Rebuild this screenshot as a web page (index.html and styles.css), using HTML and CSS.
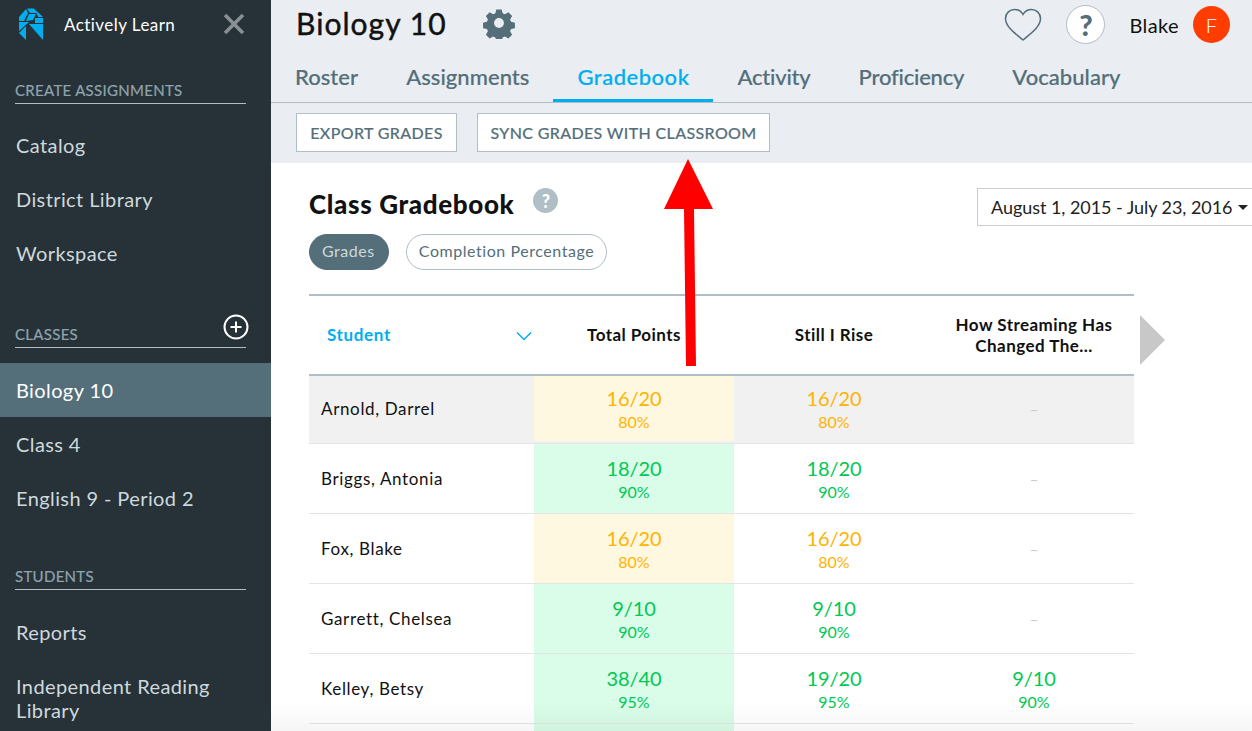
FILE: index.html
```html
<!DOCTYPE html>
<html lang="en">
<head>
<meta charset="utf-8">
<title>Class Gradebook</title>
<link rel="stylesheet" href="styles.css">
</head>
<body>
<div class="app">
  <aside class="sidebar">
    <div class="brand">
      <svg class="logo" viewBox="0 0 25 33" width="25" height="33">
        <polygon fill="#00aeef" points="0,9 7,1 9,5 5,13 0,13"/>
        <polygon fill="#00aeef" points="8,0.5 15,0.5 18,5 11,5"/>
        <polygon fill="#00aeef" points="10,6 17,6 14,12 7,13"/>
        <polygon fill="#00aeef" points="16,1.5 24,9 19,9"/>
        <polygon fill="#00aeef" points="16,10 24,10 24,15 16,15"/>
        <polygon fill="#00aeef" points="0,14 10,14 0,23"/>
        <polygon fill="#00aeef" points="0,25 7,18 7,32"/>
        <polygon fill="#00aeef" points="10,16 24,16 24,32"/>
      </svg>
      <span class="brand-name">Actively Learn</span>
      <svg class="close" viewBox="0 0 20 20" width="20" height="20"><path d="M1 1 19 19M19 1 1 19" stroke="#8a8f92" stroke-width="3.6" fill="none"/></svg>
    </div>
    <div class="side-head head-create"><span>CREATE ASSIGNMENTS</span></div>
    <nav class="side-list">
      <a class="side-item">Catalog</a>
      <a class="side-item">District Library</a>
      <a class="side-item">Workspace</a>
    </nav>
    <div class="side-head head-classes"><span>CLASSES</span>
      <svg class="plus" viewBox="0 0 26 26" width="26" height="26"><circle cx="13" cy="13" r="11.5" fill="none" stroke="#fff" stroke-width="2"/><path d="M7.5 13h11M13 7.500v11" stroke="#fff" stroke-width="2"/></svg>
    </div>
    <nav class="side-list">
      <a class="side-item active">Biology 10</a>
      <a class="side-item">Class 4</a>
      <a class="side-item">English 9 - Period 2</a>
    </nav>
    <div class="side-head head-students"><span>STUDENTS</span></div>
    <nav class="side-list">
      <a class="side-item">Reports</a>
      <a class="side-item multi">Independent Reading Library</a>
    </nav>
  </aside>

  <main class="main">
    <header class="topbar">
      <div class="title-row">
        <h1 class="class-title">Biology 10</h1>
        <svg class="gear" viewBox="0 0 32 32" width="32" height="32">
          <path fill="#546e7a" fill-rule="evenodd" d="M13 1h6l1 4.300 2.600 1.100 3.800-2.300 4.200 4.200-2.300 3.800 1.100 2.600 4.300 1v6l-4.300 1-1.100 2.600 2.300 3.800-4.200 4.200-3.800-2.300-2.600 1.100-1 4.300h-6l-1-4.300-2.600-1.100-3.800 2.300-4.200-4.200 2.300-3.800-1.100-2.600-4.300-1v-6l4.300-1 1.100-2.600-2.300-3.800 4.200-4.200 3.800 2.300 2.600-1.100zM16 10.500a5.500 5.500 0 1 0 0 11 5.500 5.500 0 0 0 0-11z" transform="translate(1.600 1.600) scale(.9)"/>
        </svg>
        <div class="top-right">
          <svg class="heart" viewBox="0 0 38 34" width="38" height="34"><path d="M19 32C12 26 1.500 19 1.500 10.500 1.500 5.500 5.500 1.500 10.500 1.500c3.500 0 6.800 2 8.500 5 1.700-3 5-5 8.500-5 5 0 9 4 9 9C36.500 19 26 26 19 32z" fill="none" stroke="#546e7a" stroke-width="1.500"/></svg>
          <span class="help-circle">?</span>
          <span class="user-name">Blake</span>
          <span class="avatar">F</span>
        </div>
      </div>
      <nav class="tabs">
        <a class="tab">Roster</a>
        <a class="tab">Assignments</a>
        <a class="tab current">Gradebook</a>
        <a class="tab tight">Activity</a>
        <a class="tab tight">Proficiency</a>
        <a class="tab">Vocabulary</a>
      </nav>
      <div class="actions">
        <button class="action-btn btn-export">EXPORT GRADES</button>
        <button class="action-btn btn-sync">SYNC GRADES WITH CLASSROOM</button>
      </div>
    </header>

    <section class="content">
      <div class="content-head">
        <div>
          <div class="gb-title-row">
            <h2 class="gb-title">Class Gradebook</h2>
            <span class="gb-help">?</span>
          </div>
          <div class="pills">
            <span class="pill on">Grades</span>
            <span class="pill">Completion Percentage</span>
          </div>
        </div>
        <div class="date-range">August 1, 2015 - July 23, 2016<i class="caret"></i></div>
      </div>

      <div class="table-wrap">
        <div class="table">
          <div class="t-row t-header">
            <div class="cell student-h"><span>Student</span>
              <svg viewBox="0 0 16 10" width="16" height="10"><path d="M1 1.500 8 8.500 15 1.500" fill="none" stroke="#00aeef" stroke-width="1.500"/></svg>
            </div>
            <div class="cell col-h">Total Points</div>
            <div class="cell col-h">Still I Rise</div>
            <div class="cell col-h">How Streaming Has Changed The...</div>
          </div>

          <div class="t-row first hover">
            <div class="cell name">Arnold, Darrel</div>
            <div class="cell score amber bg-amber"><b>16/20</b><small>80%</small></div>
            <div class="cell score amber"><b>16/20</b><small>80%</small></div>
            <div class="cell score none">–</div>
          </div>
          <div class="t-row">
            <div class="cell name">Briggs, Antonia</div>
            <div class="cell score green bg-green"><b>18/20</b><small>90%</small></div>
            <div class="cell score green"><b>18/20</b><small>90%</small></div>
            <div class="cell score none">–</div>
          </div>
          <div class="t-row">
            <div class="cell name">Fox, Blake</div>
            <div class="cell score amber bg-amber"><b>16/20</b><small>80%</small></div>
            <div class="cell score amber"><b>16/20</b><small>80%</small></div>
            <div class="cell score none">–</div>
          </div>
          <div class="t-row">
            <div class="cell name">Garrett, Chelsea</div>
            <div class="cell score green bg-green"><b>9/10</b><small>90%</small></div>
            <div class="cell score green"><b>9/10</b><small>90%</small></div>
            <div class="cell score none">–</div>
          </div>
          <div class="t-row">
            <div class="cell name">Kelley, Betsy</div>
            <div class="cell score green bg-green"><b>38/40</b><small>95%</small></div>
            <div class="cell score green"><b>19/20</b><small>95%</small></div>
            <div class="cell score green"><b>9/10</b><small>90%</small></div>
          </div>
          <div class="t-row">
            <div class="cell name"></div>
            <div class="cell score bg-green"></div>
            <div class="cell score"></div>
            <div class="cell score"></div>
          </div>
        </div>
        <i class="next-arrow"></i>
      </div>
    </section>
  </main>

  <div class="fade"></div>
  <svg class="annotation" viewBox="0 0 60 220" width="60" height="220">
    <polygon fill="#ff0000" points="30,2 55,52 36,52 38,209 28,209 26,52 6,52"/>
  </svg>
</div>
</body>
</html>
```
FILE: styles.css
```css
* { box-sizing: border-box; }
html, body { margin: 0; height: 100%; overflow: hidden; background: #fff; }
body { font-family: "Lato", "Noto Sans", sans-serif; color: #111; }

.app { display: flex; width: 1252px; height: 731px; overflow: hidden; position: relative; }

/* Sidebar */
.sidebar { width: 271px; flex: none; height: 731px; background: #263238; color: #fff; overflow: hidden; }
.brand { display: flex; align-items: center; height: 50px; padding: 0 27px 2px 19px; }
.logo { flex: none; }
.brand-name { margin-left: 20px; font-size: 17px; letter-spacing: .45px; color: #fff; flex: 1; }
.close { flex: none; }

.side-head { margin: 0 25px 0 15px; height: 26px; border-bottom: 1px solid #b0bec5; font-size: 15px; letter-spacing: .3px; color: #90a4ae; display: flex; align-items: flex-start; justify-content: space-between; position: relative; line-height: 17px; -webkit-text-stroke: .2px #90a4ae; }
.side-head span { padding-top: 4px; }
.head-create { margin-top: 28px; margin-bottom: 14px; }
.head-classes { margin-top: 42px; margin-bottom: 15px; }
.head-students { margin-top: 39px; margin-bottom: 15px; }
.plus { position: absolute; right: -3px; top: -8px; }

.side-list { display: flex; flex-direction: column; }
.side-item { display: flex; align-items: center; height: 54px; padding: 0 16px; font-size: 20px; letter-spacing: .4px; color: #cfd8dc; }
.side-item.active { background: #546e7a; color: #fff; }
.side-item.multi { height: auto; padding-top: 15px; line-height: 24px; width: 240px; }

/* Main */
.main { flex: 1; min-width: 0; display: flex; flex-direction: column; }
.topbar { height: 163px; flex: none; background: #eaeef2; }
.title-row { display: flex; align-items: center; height: 49px; padding: 0 22px 0 25px; }
.class-title { margin: 0 0 3px; font-size: 30px; font-weight: 400; letter-spacing: 1.05px; color: #111; -webkit-text-stroke: .45px #111; }
.gear { margin: 0 0 3px 36px; flex: none; }
.top-right { margin-left: auto; display: flex; align-items: center; }
.heart { flex: none; margin-top: 1px; }
.help-circle { width: 39px; height: 39px; border-radius: 50%; background: #fff; border: 1px solid #b0bec5; margin-left: 24px; display: flex; align-items: center; justify-content: center; font-size: 29px; font-weight: 900; color: #546e7a; }
.user-name { margin-left: 24px; font-size: 20px; letter-spacing: .4px; color: #111; }
.avatar { width: 37px; height: 37px; border-radius: 50%; background: #ff3d00; color: #fff; margin-left: 14px; display: flex; align-items: center; justify-content: center; font-size: 20px; font-weight: 300; }

.tabs { display: flex; height: 54px; border-bottom: 1px solid #b0bec5; }
.tab { height: 53px; padding: 14px 24px 0; font-size: 22px; font-weight: 500; letter-spacing: .05px; color: #546e7a; white-space: nowrap; -webkit-text-stroke: .2px #546e7a; }
.tab.tight { letter-spacing: -.2px; }
.tab.current { color: #00aeef; border-bottom: 3px solid #00aeef; letter-spacing: .5px; -webkit-text-stroke: .2px #00aeef; }

.actions { display: flex; gap: 20px; padding: 10px 25px 0; }
.action-btn { height: 39px; background: #fff; border: 1px solid #b0bec5; padding: 0; text-align: center; font-family: inherit; font-size: 16px; font-weight: 500; letter-spacing: .36px; color: #546e7a; border-radius: 0; -webkit-text-stroke: .15px #546e7a; }
.btn-export { width: 161px; }
.btn-sync { width: 293px; }

/* Content */
.content { flex: 1; padding: 0 0 0 38px; background: #fff; }
.content-head { display: flex; justify-content: space-between; align-items: flex-start; height: 131px; }
.gb-title-row { display: flex; align-items: center; height: 71px; padding-top: 11px; }
.gb-title { margin: 0; font-size: 26px; font-weight: 900; letter-spacing: .65px; color: #111; }
.gb-help { width: 25px; height: 25px; border-radius: 50%; background: #b0bec5; color: #fff; margin-left: 19px; margin-top: -7px; display: flex; align-items: center; justify-content: center; font-size: 18px; font-weight: 900; }
.pills { display: flex; gap: 17px; }
.pill { height: 36px; border-radius: 18px; border: 1px solid #b0bec5; padding: 0 12px 3px; display: flex; align-items: center; font-size: 16px; letter-spacing: .55px; color: #546e7a; }
.pill.on { background: #546e7a; border-color: #546e7a; color: #cfd8dc; padding: 0 13px 3px 12px; }
.date-range { margin-top: 25px; height: 38px; width: 275px; flex: none; border: 1px solid #ccc; border-right: 0; padding: 0 0 0 13px; display: flex; align-items: center; font-size: 18px; letter-spacing: -.05px; color: #222; white-space: nowrap; }
.caret { display: inline-block; margin-left: 6px; border-left: 5px solid transparent; border-right: 5px solid transparent; border-top: 5px solid #222; }

.table-wrap { display: flex; align-items: flex-start; }
.table { width: 825px; flex: none; border-top: 2px solid #b0bec5; }
.t-row { display: grid; grid-template-columns: 225px 200px 200px 200px; height: 70px; border-bottom: 1px solid #e4e4e4; }
.t-header { height: 80px; padding-bottom: 1px; border-bottom: 2px solid #b0bec5; }
.t-row.first { height: 68px; padding-bottom: 2px; }
.hover { background: #f1f1f1; }
.cell { display: flex; flex-direction: column; align-items: center; justify-content: center; }
.student-h { flex-direction: row; justify-content: space-between; padding: 0 2px 0 18px; color: #00aeef; font-size: 17px; font-weight: 700; letter-spacing: .65px; }
.student-h svg { flex: none; margin-top: 3px; }
.col-h { font-size: 17px; font-weight: 700; color: #111; text-align: center; line-height: 21px; padding: 0 10px; letter-spacing: .45px; }
.name { align-items: flex-start; padding-left: 12px; font-size: 17px; letter-spacing: .65px; color: #111; }
.score b { font-size: 20px; font-weight: 400; line-height: 25px; letter-spacing: -.05px; }
.score small { font-size: 16px; line-height: 20px; margin-top: 1px; }
.amber { color: #ffb300; }
.green { color: #00c853; }
.bg-amber { background: #fff8e1; }
.bg-green { background: #d9fde8; }
.none { color: #ccc; font-size: 15px; }
.next-arrow { margin: 21px 0 0 6px; width: 0; height: 0; border-top: 25px solid transparent; border-bottom: 25px solid transparent; border-left: 25px solid #c8c8c8; }

/* Overlays */
.fade { position: absolute; left: 271px; right: 0; bottom: 0; height: 30px; background: linear-gradient(rgba(0,0,0,0), rgba(0,0,0,.035)); pointer-events: none; }
.annotation { position: absolute; left: 658px; top: 157px; }
```
